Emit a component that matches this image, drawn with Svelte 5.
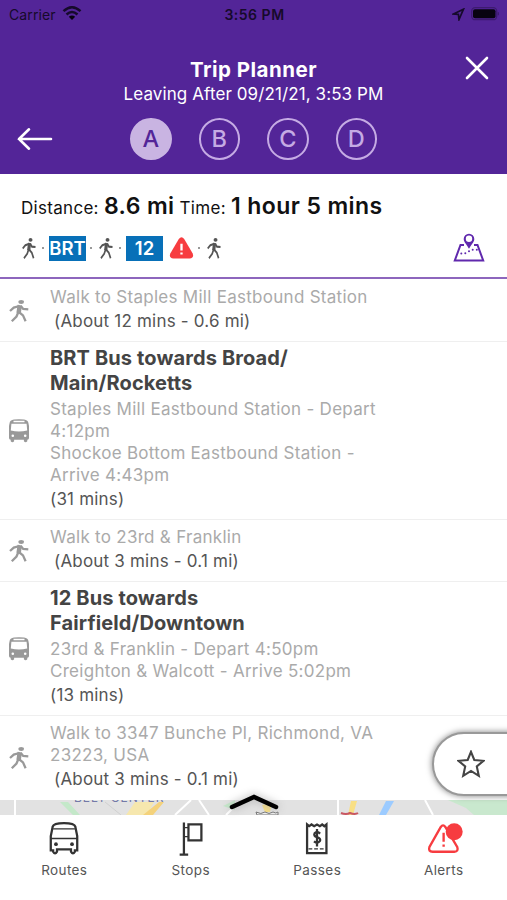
<script>
	let options = ["A", "B", "C", "D"];
	let selected = "A";

	let legs = [
		{
			type: "walk",
			lines: ["Walk to Staples Mill Eastbound Station"],
			time: "(About 12 mins - 0.6 mi)",
		},
		{
			type: "bus",
			title: ["BRT Bus towards Broad/", "Main/Rocketts"],
			lines: [
				"Staples Mill Eastbound Station - Depart",
				"4:12pm",
				"Shockoe Bottom Eastbound Station -",
				"Arrive 4:43pm",
			],
			time: "(31 mins)",
		},
		{
			type: "walk",
			lines: ["Walk to 23rd & Franklin"],
			time: "(About 3 mins - 0.1 mi)",
		},
		{
			type: "bus",
			title: ["12 Bus towards", "Fairfield/Downtown"],
			lines: [
				"23rd & Franklin - Depart 4:50pm",
				"Creighton & Walcott - Arrive 5:02pm",
			],
			time: "(13 mins)",
		},
		{
			type: "walk",
			lines: ["Walk to 3347 Bunche Pl, Richmond, VA", "23223, USA"],
			time: "(About 3 mins - 0.1 mi)",
		},
	];
	let tabs = ["Routes", "Stops", "Passes", "Alerts"];
</script>

{#snippet walker()}
	<svg class="walker" viewBox="0 0 20 22" preserveAspectRatio="none">
		<ellipse cx="12.2" cy="2" rx="2.8" ry="1.9" />
		<path
			d="M9.8 12 L14 15.4 L16.6 21.2 M9.4 12 L7.5 16.5 L2.8 21.2 M10.5 6 L4.8 7.6 L1 11 M11.8 6 L14.2 9 L19.3 9.4"
		/>
		<path class="torso" d="M10.8 5.2 L9.6 13" />
	</svg>
{/snippet}

<div class="screen">
	<header>
		<div class="status">
			<span class="carrier">
				Carrier
				<svg width="20" height="15" viewBox="0 0 20 15">
					<path d="M1.5 5.2 Q10 -2.6 18.5 5.2 M4.5 8.5 Q10 3.5 15.5 8.5" />
					<path class="solid" d="M6.8 10.8 Q10 8.2 13.2 10.8 L10 14Z" />
				</svg>
			</span>
			<b>3:56 PM</b>
			<span class="power">
				<svg width="13" height="13" viewBox="0 0 13 13">
					<path d="M1.5 6 L11.5 1.2 L7 11.5 L6.4 6.4Z" />
				</svg>
				<svg width="29" height="14" viewBox="0 0 29 14">
					<rect class="case" x="0.7" y="0.7" width="25" height="12" rx="3.5" />
					<rect class="solid" x="2" y="2.3" width="22.5" height="9" rx="2" />
					<path class="case" d="M27.3 5.3 V8.2" />
				</svg>
			</span>
		</div>
		<h1>Trip Planner</h1>
		<p class="leaving">Leaving After 09/21/21, 3:53 PM</p>
		<button class="close" aria-label="Close">
			<svg width="24" height="24" viewBox="0 0 24 24">
				<path d="M2 2 L22 22 M22 2 L2 22" />
			</svg>
		</button>
		<div class="options">
			<button class="back" aria-label="Back">
				<svg width="36" height="24" viewBox="0 0 36 24">
					<path d="M12 2.3 L2 12 L12 21.7 M2 12 H34" />
				</svg>
			</button>
			{#each options as option (option)}
				<button
					class="option"
					class:active={option === selected}
					on:click={() => (selected = option)}>{option}</button
				>
			{/each}
		</div>
	</header>

	<section class="summary">
		<p class="totals">
			<span>Distance:</span> <b>8.6 mi</b>
			<span>Time:</span> <b>1 hour 5 mins</b>
		</p>
		<div class="trip">
			{@render walker()}
			<i class="dot"></i>
			<span class="route">BRT</span>
			<i class="dot"></i>
			{@render walker()}
			<i class="dot"></i>
			<span class="route">12</span>
			<svg class="warning" width="25" height="24" viewBox="0 0 26 24">
				<path
					d="M10.2 2.6 Q13 -1.2 15.8 2.6 L24.5 17.4 Q26.5 22.4 21.5 23 H4.5 Q-0.5 22.4 1.5 17.4Z"
				/>
				<path class="mark" d="M13 7.5 V14.5 M13 16.7 V18.8" />
			</svg>
			<i class="dot"></i>
			{@render walker()}
			<svg class="map-icon" width="32" height="30" viewBox="0 0 32 30">
				<path d="M11 12 H7.5 L1.8 27.5 H30.2 L24.5 12 H21" />
				<path
					class="pin"
					fill-rule="evenodd"
					d="M16 0.7 A5.3 5.3 0 0 1 21.3 6 C21.3 9 18 12 16 15.8 C14 12 10.7 9 10.7 6 A5.3 5.3 0 0 1 16 0.7Z M16 2.6 A3.2 3.2 0 1 0 16 9 A3.2 3.2 0 1 0 16 2.6Z"
				/>
				<path
					class="trail"
					d="M8.3 20.6 h.01 M12.3 20.2 h.01 M16 18.3 h.01 M19.7 16.8 h.01 M23.8 16.8 h.01"
				/>
			</svg>
		</div>
	</section>

	<ul class="legs">
		{#each legs as leg}
			<li class={leg.type}>
				<div class="leg-icon">
					{#if leg.type === "walk"}
						{@render walker()}
					{:else}
						<svg width="20" height="24" viewBox="0 0 20 24">
							<path
								fill-rule="evenodd"
								d="M.6 4 Q.8 1 5 .5 Q10 0 15 .5 Q19.2 1 19.4 4 L20 7 V19 Q20 20.8 18.3 20.8 V22.3 Q16.5 24 14.9 22.3 V20.8 H5.1 V22.3 Q3.5 24 1.7 22.3 V20.8 Q0 20.8 0 19 V7Z M4.5 1.8 V3.2 H15.5 V1.8Z M2.4 4.8 L1.8 11.6 Q10 13.4 18.2 11.6 L17.6 4.8Z M3.8 15.4 A1.3 1.3 0 1 0 3.8 18 A1.3 1.3 0 1 0 3.8 15.4Z M16.2 15.4 A1.3 1.3 0 1 0 16.2 18 A1.3 1.3 0 1 0 16.2 15.4Z"
							/>
						</svg>
					{/if}
				</div>
				<div class="leg-text">
					{#if leg.title}
						<h2>
							{#each leg.title as line}<span>{line}</span>{/each}
						</h2>
					{/if}
					{#each leg.lines as line}
						<p>{line}</p>
					{/each}
					<p class="duration" class:indent={leg.type === "walk"}>{leg.time}</p>
				</div>
			</li>
		{/each}
	</ul>

	<div class="map">
		<svg width="507" height="15" viewBox="0 0 507 15">
			<rect width="507" height="15" fill="#e2e2e2" />
			<path d="M448 0 H507 V15 H474 L466 8Z" fill="#c9e8ce" />
			<path d="M60 2 L68 2 L80 15 H73Z M223 6 L235 0 V10Z" fill="#c4e8c9" />
			<path d="M126 15 L135 2 L154 2 L147 15Z" fill="#f6e7ae" />
			<path d="M143 15 L159 2 H164 L153 15Z" fill="#f4d27b" />
			<path d="M262 5 L272 3 L270 12 H265Z M351 1 H357 L353 15 H348Z" fill="#f8df85" />
			<path d="M386 1 H394 L386 15 H379Z" fill="#9ccbff" />
			<path
				d="M15 0 V15 M175 15 L191 0 M199 0 L209 15 M226 15 L237 4 M338 0 V15 M425 0 L433 15"
				fill="none"
				stroke="#fff"
				stroke-width="2"
			/>
			<path d="M105 2 L121 15" stroke="#d0d0d0" />
			<path
				d="M256 12 q5 3 9 0 q4 3 8 0 q3 2 5 0 V15 H257Z"
				fill="#eee"
				stroke="#777"
			/>
			<path d="M341 13 q5 2 9 0 q5 2 8 0" fill="none" stroke="#c95862" stroke-width="2" />
		</svg>
		<span class="place">BELT CENTER</span>
	</div>
	<svg class="expand" width="56" height="26" viewBox="0 0 56 26">
		<path d="M6 19 L28 9 L50 19" />
	</svg>
	<button class="favorite" aria-label="Favorite">
		<svg width="28" height="28" viewBox="0 0 28 28">
			<path
				d="M14 1.8 L17.3 10 L26.5 10.8 L19.8 16.4 L21.8 25.8 L14 20.9 L6.2 25.8 L8.2 16.4 L1.5 10.8 L10.7 10Z"
			/>
		</svg>
	</button>

	<nav>
		{#each tabs as tab (tab)}
			<a href="#{tab.toLowerCase()}">
				<svg class={tab.toLowerCase()} width="34" height="34" viewBox="0 0 36 36">
					{#if tab === "Routes"}
						<path
							d="M4 16 L6 6 Q7 2.3 18 2.3 Q29 2.3 30 6 L32 16 V31 H29.5 V32.5 Q27.5 36 25.4 32.5 V30 H10.6 V32.5 Q8.5 36 6.5 32.5 V31 H4Z"
						/>
						<path class="thin" d="M6.5 8.3 H29.5 M4 18.5 H32" />
						<circle cx="9.5" cy="24.5" r="2" />
						<circle cx="26.5" cy="24.5" r="2" />
					{:else if tab === "Stops"}
						<path d="M10.5 1.5 V35.5 M6 35.5 H15 M15.3 3.5 H29 V20.5 H15.3Z" />
						<path class="thin" d="M10.5 7 H15.3 M10.5 16.5 H15.3" />
					{:else if tab === "Passes"}
						<path
							d="M7.5 3.7 l2.2 1.8 2.5-1.8 2.8 1.8 3-1.8 3 1.8 2.5-1.8 2.3 1.8 2.2-1.8 V34 H7.5Z"
						/>
						<path class="tear" d="M9 29.5 H27" />
						<path
							class="dollar"
							d="M18 8.5 V27 M21.3 13.3 Q18 10.3 15.5 13 Q14 15.8 18 17.1 Q22.6 18.5 21 21.3 Q18.5 24.3 14.8 21.5"
						/>
					{:else}
						<path
							d="M14.6 6.3 Q17 3 19.4 6.3 L32 27.5 Q33.6 32.4 29 32.6 H6 Q1 32.4 2.6 27.5Z"
						/>
						<path class="mark" d="M17.6 12.5 V22 M17.6 25 V27.2" />
						<circle cx="28.8" cy="11.3" r="9" />
					{/if}
				</svg>
				{tab}
			</a>
		{/each}
	</nav>
</div>

<style>
	:global(body) {
		margin: 0;
		background: #fff;
	}
	.screen {
		position: relative;
		display: flex;
		flex-direction: column;
		width: 507px;
		height: 900px;
		overflow: hidden;
		background: #fff;
		font-family: Inter, "Liberation Sans", sans-serif;
		color: #444;
	}
	h1,
	h2,
	p,
	ul {
		margin: 0;
		padding: 0;
		font-weight: 400;
	}
	button {
		padding: 0;
		border: none;
		background: none;
		font-family: inherit;
		cursor: pointer;
	}
	svg {
		display: block;
		flex-shrink: 0;
	}

	header {
		position: relative;
		box-sizing: border-box;
		height: 174px;
		flex-shrink: 0;
		background: #532598;
		color: #fff;
		text-align: center;
	}
	.status {
		display: grid;
		grid-template-columns: 1fr auto 1fr;
		align-items: center;
		box-sizing: border-box;
		height: 28px;
		padding: 0 7px 0 9px;
		font-size: 14px;
		color: #160a2b;
	}
	.status b {
		font-size: 14px;
		font-weight: 600;
		letter-spacing: 0.5px;
	}
	.status svg {
		fill: none;
		stroke: #160a2b;
		stroke-width: 2.5;
	}
	.carrier svg {
		margin-top: -2px;
	}
	.status .solid {
		fill: #080310;
		stroke: none;
	}
	.status .case {
		stroke: #3d1b70;
		stroke-width: 1.3;
	}
	.carrier,
	.power {
		display: flex;
		align-items: center;
		gap: 6px;
		letter-spacing: 0.1px;
	}
	.power {
		justify-content: flex-end;
	}
	.power svg:first-child {
		stroke-width: 1.7;
	}
	h1 {
		margin-top: 29px;
		font-size: 20.5px;
		font-weight: 700;
		line-height: 26px;
		letter-spacing: 0.5px;
	}
	.leaving {
		font-size: 17px;
		line-height: 22px;
		letter-spacing: 0.1px;
	}
	.close {
		position: absolute;
		top: 56px;
		right: 18px;
	}
	header button svg {
		fill: none;
		stroke: #fff;
		stroke-width: 2.6;
		stroke-linecap: round;
	}
	.options {
		display: flex;
		align-items: center;
		gap: 27px;
		margin-top: 13px;
		padding-left: 17px;
	}
	.back {
		margin-right: 50px;
	}
	.option {
		box-sizing: border-box;
		width: 41.5px;
		height: 42px;
		border: 2px solid #c5abe4;
		border-radius: 50%;
		font-size: 23.5px;
		font-weight: 500;
		line-height: 38px;
		color: #c5abe4;
	}
	.option.active {
		background: #c9b4e2;
		border-color: #c9b4e2;
		color: #532598;
	}

	.summary {
		box-sizing: border-box;
		height: 105px;
		flex-shrink: 0;
		padding: 17px 22px 0 21px;
		border-bottom: 2px solid #8d66bd;
		color: #111;
	}
	.totals {
		line-height: 30px;
		white-space: nowrap;
		font-size: 17px;
		letter-spacing: 0.3px;
	}
	.totals b {
		font-size: 23px;
		font-weight: 600;
		letter-spacing: 0.4px;
	}
	.trip {
		display: flex;
		align-items: center;
		height: 28px;
		margin-top: 11px;
		padding-left: 1px;
		color: #555;
	}
	.walker {
		width: 20px;
		height: 22px;
		fill: currentColor;
	}
	.walker path {
		fill: none;
		stroke: currentColor;
		stroke-width: 2.3;
	}
	.walker .torso {
		stroke-width: 4.5;
	}
	.trip .walker {
		width: 14px;
		height: 21px;
	}
	.dot {
		width: 2px;
		height: 2px;
		margin: 0 5px 1px 6px;
		background: #999;
	}
	.route + .dot,
	.warning + .dot {
		margin-left: 4px;
		margin-right: 7px;
	}
	.route {
		width: 37px;
		height: 25px;
		background: #0870b8;
		font-size: 18.5px;
		font-weight: 600;
		line-height: 25px;
		text-align: center;
		color: #fff;
	}
	.warning {
		margin-left: 6px;
		fill: #f73c40;
	}
	.warning .mark {
		stroke: #fff;
		stroke-width: 2.4;
	}
	.map-icon {
		margin-left: auto;
		fill: none;
		stroke: #6029ad;
		stroke-width: 2;
	}
	.map-icon .pin {
		fill: #6029ad;
		stroke: none;
	}
	.map-icon .trail {
		stroke-linecap: round;
	}

	.legs {
		list-style: none;
	}
	li {
		display: flex;
		align-items: center;
		box-sizing: border-box;
		padding: 6px 0 8px;
		border-bottom: 1px solid #efefef;
	}
	li.bus {
		padding-top: 4px;
	}
	li:first-child {
		padding-top: 7px;
	}
	li:last-child {
		padding-bottom: 9px;
		border-bottom: none;
	}
	.leg-icon {
		width: 41px;
		padding-top: 3px;
		padding-left: 9px;
		color: #999;
		fill: #999;
	}
	.bus .leg-icon {
		padding-top: 5px;
	}
	.leg-text {
		white-space: nowrap;
		font-size: 17px;
		line-height: 22px;
		letter-spacing: 0.28px;
		color: #aaa;
	}
	h2 {
		margin-bottom: 3px;
		font-size: 20px;
		font-weight: 700;
		line-height: 24.5px;
		letter-spacing: 0.12px;
		color: #444;
	}
	h2 span {
		display: block;
	}
	.duration {
		margin-top: 1px;
		line-height: 24px;
		letter-spacing: 0.2px;
		color: #555;
	}
	.indent {
		padding-left: 4px;
	}

	.map {
		position: relative;
		height: 15px;
		margin-top: auto;
		overflow: hidden;
	}
	/* label runs under the leg list, only its lower edge shows */
	.place {
		position: absolute;
		top: -10px;
		left: 74px;
		font-size: 12px;
		line-height: 15px;
		letter-spacing: 1px;
		color: #7379a8;
	}
	.expand {
		position: absolute;
		top: 788px;
		left: 226px;
		fill: none;
		stroke: #000;
		stroke-width: 4.5;
		stroke-linecap: round;
		filter: drop-shadow(0 0 4px #aaa);
	}
	.favorite {
		position: absolute;
		top: 732px;
		right: -20px;
		box-sizing: border-box;
		width: 95px;
		height: 64px;
		padding-left: 23px;
		border: 2px solid #999;
		border-radius: 32px 0 0 32px;
		background: #fff;
		box-shadow: 0 0 6px rgba(0, 0, 0, 0.5);
	}
	.favorite svg {
		fill: none;
		stroke: #444;
		stroke-width: 2.1;
	}

	nav {
		display: grid;
		grid-template-columns: repeat(4, 126.5px);
		box-sizing: border-box;
		height: 85px;
		flex-shrink: 0;
		padding: 6px 0 0 1px;
		background: #fff;
	}
	nav a {
		display: flex;
		flex-direction: column;
		align-items: center;
		gap: 5px;
		font-size: 13.5px;
		line-height: 20px;
		letter-spacing: 0.4px;
		text-decoration: none;
		color: #555;
	}
	nav svg {
		overflow: visible;
		fill: none;
		stroke: #333;
		stroke-width: 2.4;
	}
	nav circle {
		fill: #333;
		stroke: none;
	}
	nav .thin {
		stroke-width: 1.5;
	}
	nav .tear {
		stroke-width: 1.3;
		stroke-dasharray: 4 2;
	}
	nav .alerts {
		stroke: #f73c40;
		stroke-width: 2.5;
	}
	nav .alerts circle {
		fill: #f73c40;
	}
</style>
